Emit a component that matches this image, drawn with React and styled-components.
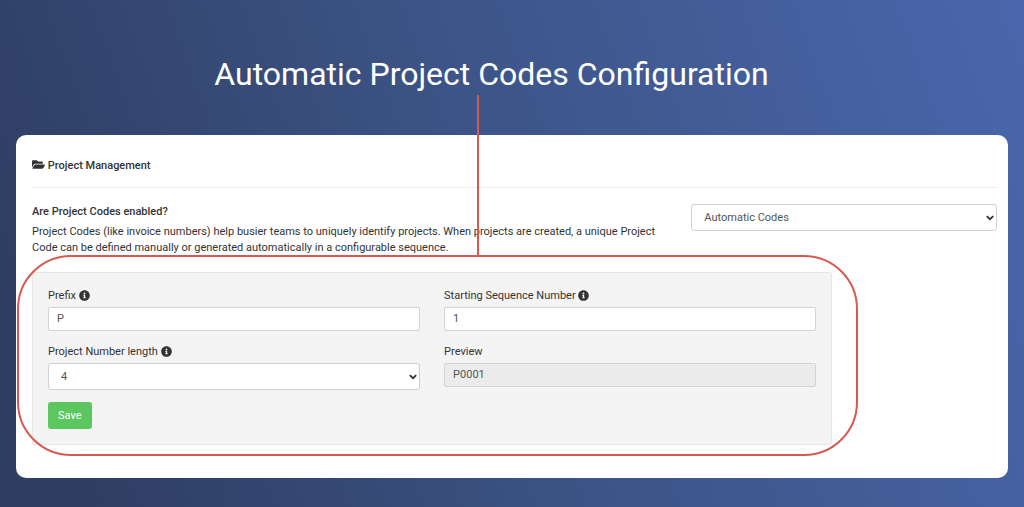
import React, { useState } from 'react';
import styled, { createGlobalStyle } from 'styled-components';
import { FaFolderOpen, FaInfoCircle } from 'react-icons/fa';

const lengths = ['3', '4', '5', '6'];

export default function App() {
    const [mode, setMode] = useState('automatic');
    const [prefix, setPrefix] = useState('P');
    const [start, setStart] = useState('1');
    const [length, setLength] = useState('4');

    const preview = `${prefix}${start.padStart(Number(length), '0')}`;

    return (
        <Page>
            <GlobalStyle />
            <Title>Automatic Project Codes Configuration</Title>
            <Card>
                <CardHeader>
                    <FaFolderOpen size={13} /> Project Management
                </CardHeader>
                <Grid>
                    <Column $span={8}>
                        <Question htmlFor='mode'>Are Project Codes enabled?</Question>
                        <Help>
                            Project Codes (like invoice numbers) help busier teams to uniquely identify projects.
                            When projects are created, a unique Project Code can be defined manually or generated
                            automatically in a configurable sequence.
                        </Help>
                    </Column>
                    <Column $span={4}>
                        <SelectBox>
                            <Select id='mode' value={mode} onChange={(e) => setMode(e.target.value)}>
                                <option value='automatic'>Automatic Codes</option>
                                <option value='manual'>Manual Codes</option>
                                <option value='off'>Disabled</option>
                            </Select>
                            <Chevron />
                        </SelectBox>
                    </Column>
                    <Well $span={10} onSubmit={(e) => e.preventDefault()}>
                        <Fields>
                            <Field>
                                <Label htmlFor='prefix'>
                                    Prefix <FaInfoCircle size={11} />
                                </Label>
                                <Input id='prefix' value={prefix} onChange={(e) => setPrefix(e.target.value)} />
                            </Field>
                            <Field>
                                <Label htmlFor='start'>
                                    Starting Sequence Number <FaInfoCircle size={11} />
                                </Label>
                                <Input id='start' value={start} onChange={(e) => setStart(e.target.value)} />
                            </Field>
                            <Field>
                                <Label htmlFor='length'>
                                    Project Number length <FaInfoCircle size={11} />
                                </Label>
                                <SelectBox>
                                    <Select id='length' value={length} onChange={(e) => setLength(e.target.value)}>
                                        {lengths.map((item) => (
                                            <option key={item}>{item}</option>
                                        ))}
                                    </Select>
                                    <Chevron />
                                </SelectBox>
                            </Field>
                            <Field>
                                <Label htmlFor='preview'>Preview</Label>
                                <Input id='preview' value={preview} disabled />
                            </Field>
                        </Fields>
                        <SaveButton>Save</SaveButton>
                        <Callout />
                    </Well>
                </Grid>
            </Card>
        </Page>
    );
}

function Chevron() {
    return (
        <ChevronIcon viewBox='0 0 8 6' aria-hidden='true'>
            <path d='M0.8 1.2 L4 4.2 L7.2 1.2' />
        </ChevronIcon>
    );
}

const GlobalStyle = createGlobalStyle`
    * {
        box-sizing: border-box;
    }
    body {
        margin: 0;
        font-family: Roboto, 'Liberation Sans', sans-serif;
        font-size: 11px;
        line-height: 16px;
        color: #333;
    }
`;

const Page = styled.main`
    min-height: 100vh;
    padding: 52px 16px 29px;
    background: linear-gradient(70deg, #2f3e63 8%, #3c5486 50%, #4a67ad 100%);
`;

const Title = styled.h1`
    margin: 0 41px 39px 0;
    font-size: 32px;
    line-height: 44px;
    font-weight: 400;
    text-align: center;
    color: #fff;
`;

const Card = styled.section`
    padding: 22px 11px 33px 16px;
    border-radius: 10px;
    background: #fff;
`;

const CardHeader = styled.h2`
    margin: 0 0 16px;
    padding-bottom: 12px;
    border-bottom: 1px solid #eee;
    font-size: 11px;
    line-height: 18px;
    font-weight: 500;

    svg {
        vertical-align: -2px;
    }
`;

const Grid = styled.div`
    display: grid;
    grid-template-columns: repeat(12, 1fr);
    column-gap: 24px;
    row-gap: 16px;
`;

const Column = styled.div`
    grid-column: span ${(props) => props.$span};
`;

const Question = styled.label`
    display: block;
    margin-bottom: 4px;
    font-weight: 500;
`;

const Help = styled.p`
    margin: 0;
`;

const Well = styled.form`
    position: relative;
    grid-column: span ${(props) => props.$span};
    padding: 15px;
    border: 1px solid #e6e6e6;
    border-radius: 2px;
    background: #f4f4f4;
`;

const Fields = styled.div`
    display: grid;
    grid-template-columns: 1fr 1fr;
    gap: 13px 24px;
    margin-bottom: 12px;
`;

const Field = styled.div`
    display: flex;
    flex-direction: column;
    gap: 3px;
`;

const Label = styled.label`
    svg {
        vertical-align: -2px;
    }
`;

const Input = styled.input`
    width: 100%;
    height: 24px;
    padding: 0 8px 1px;
    border: 1px solid #d4d4d4;
    border-radius: 2px;
    background: #fff;
    font: inherit;
    color: #555;

    &:disabled {
        background: #ebebeb;
    }
`;

const SelectBox = styled.div`
    position: relative;
`;

const Select = styled.select`
    display: block;
    appearance: none;
    width: 100%;
    height: 27px;
    padding: 0 24px 0 12px;
    border: 1px solid #d0d0d0;
    border-radius: 3px;
    background: #fff;
    font: inherit;
    color: #555;
`;

const ChevronIcon = styled.svg`
    position: absolute;
    top: 11px;
    right: 3px;
    width: 8px;
    height: 6px;
    fill: none;
    stroke: #333;
    stroke-width: 1.8;
    pointer-events: none;
`;

const SaveButton = styled.button`
    display: block;
    height: 27px;
    padding: 0 10px;
    border: 0;
    border-radius: 3px;
    background: #5bc75e;
    font: inherit;
    color: #fff;
`;

/* Red outline round the form, with a line that leads up to the title */
const Callout = styled.div`
    position: absolute;
    inset: -18px -27px -12px -16px;
    border: 2px solid #d75952;
    border-radius: 54px;
    pointer-events: none;

    &::before {
        content: '';
        position: absolute;
        bottom: 100%;
        left: 458px;
        width: 2px;
        height: 162px;
        background: #d75952;
    }
`;
